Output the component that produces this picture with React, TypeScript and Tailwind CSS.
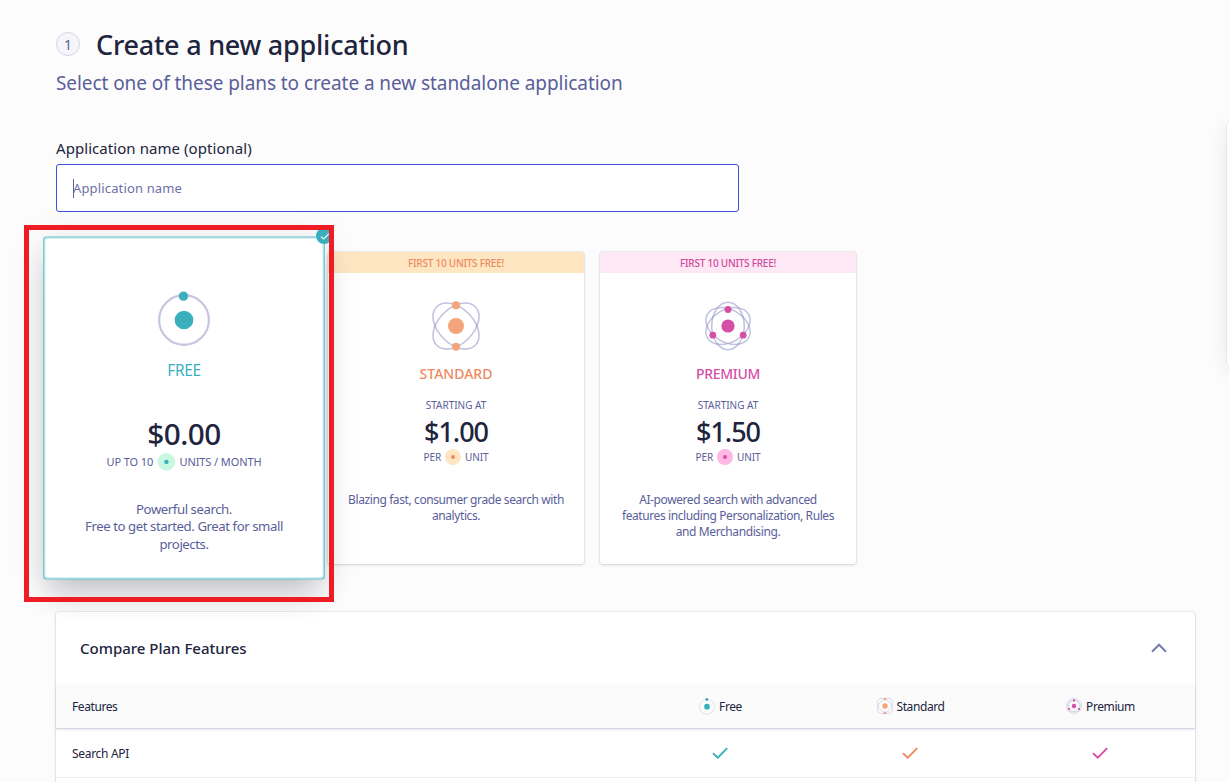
import React from "react";

const INDIGO = "#8f92c3";

function FreeIcon({ className, soft }: { className: string; soft?: boolean }) {
  return (
    <svg viewBox="0 0 48 48" className={className} fill="none">
      <circle cx="24" cy="26" r="22.6" stroke={soft ? "#dcdcec" : "#c3c4de"} strokeWidth={soft ? 2.6 : 1.9} />
      <circle cx="23.5" cy="4.3" r={soft ? 4.4 : 4.2} fill="#3ab0bf" />
      <circle cx="24" cy="26" r="8.5" fill="#3ab0bf" />
    </svg>
  );
}

function StandardIcon({ className, soft }: { className: string; soft?: boolean }) {
  return (
    <svg viewBox="0 0 48 48" className={className} fill="none">
      <g stroke={soft ? "#b9bad8" : INDIGO} strokeOpacity={soft ? 0.6 : 0.55} strokeWidth={soft ? 2.4 : 1.6}>
        <ellipse cx="24" cy="24" rx="27.3" ry="17.7" transform="rotate(45 24 24)" />
        <ellipse cx="24" cy="24" rx="27.3" ry="17.7" transform="rotate(-45 24 24)" />
      </g>
      <circle cx="24" cy="3.2" r="4" fill="#f4a47c" />
      <circle cx="24" cy="44.8" r="4" fill="#f4a47c" />
      <circle cx="24" cy="24" r="8" fill="#f4a47c" />
    </svg>
  );
}

function PremiumIcon({ className, soft }: { className: string; soft?: boolean }) {
  return (
    <svg viewBox="0 0 48 48" className={className} fill="none">
      <g stroke={soft ? "#b9bad8" : INDIGO} strokeOpacity={soft ? 0.6 : 0.55} strokeWidth={soft ? 2.2 : 1.5}>
        <ellipse cx="24" cy="24" rx="16.3" ry="23.7" />
        <ellipse cx="24" cy="24" rx="16.3" ry="23.7" transform="rotate(60 24 24)" />
        <ellipse cx="24" cy="24" rx="16.3" ry="23.7" transform="rotate(-60 24 24)" />
      </g>
      <circle cx="24" cy="7.5" r="3.4" fill="#d64fa6" />
      <circle cx="8.8" cy="33.2" r="3.4" fill="#d64fa6" />
      <circle cx="39.2" cy="33.2" r="3.4" fill="#d64fa6" />
      <circle cx="24" cy="24" r="6.6" fill="#d64fa6" />
    </svg>
  );
}

function Check({ className }: { className: string }) {
  return (
    <svg viewBox="0 0 16 12" className={className} fill="none" stroke="currentColor" strokeWidth="1.9">
      <path d="M1 6.2 5.8 10.7 15.2 1.2" />
    </svg>
  );
}

function UnitDot({ halo, dot }: { halo: string; dot: string }) {
  return (
    <span className={`flex size-4 items-center justify-center rounded-full ${halo}`}>
      <span className={`size-1 rounded-full ${dot}`} />
    </span>
  );
}

interface PlanCardProps {
  banner?: string;
  bannerClass?: string;
  icon: React.ReactNode;
  name: string;
  nameClass: string;
  starting?: string;
  price: string;
  priceClass: string;
  before: string;
  after: string;
  halo: string;
  dot: string;
  lines: string[];
}

function PlanBody(p: PlanCardProps) {
  return (
    <>
      <div
        className={`flex h-[21px] items-center justify-center rounded-t-[2px] pt-0.5 text-[10px] font-medium tracking-[-0.24px] ${p.bannerClass ?? ""}`}
      >
        {p.banner}
      </div>
      <div className="mt-[29px] flex h-12 justify-center">{p.icon}</div>
      <div className={`mt-[13px] flex h-5 items-center justify-center text-[14px] ${p.nameClass}`}>{p.name}</div>
      <div className="mt-[14px] flex h-4 items-center justify-center text-[10px] text-[#5a5e9a]">{p.starting}</div>
      <div
        className={`mt-[3px] flex h-8 items-center justify-center text-[27px] font-medium text-[#21243d] ${p.priceClass}`}
      >
        {p.price}
      </div>
      <div className="mt-px flex h-4 items-center justify-center gap-1 text-[10px] tracking-[-0.1px] text-[#5a5e9a]">
        <span>{p.before}</span>
        <UnitDot halo={p.halo} dot={p.dot} />
        <span>{p.after}</span>
      </div>
      <div className="mt-[27px] text-center text-[12px] leading-4 tracking-[-0.4px] text-[#5a5e9a]">
        {p.lines.map((line) => (
          <div key={line}>{line}</div>
        ))}
      </div>
    </>
  );
}

const columns = [
  { label: "Free", icon: <FreeIcon soft className="size-4 overflow-visible" />, color: "text-[#3ab0bf]" },
  { label: "Standard", icon: <StandardIcon soft className="size-4 overflow-visible" />, color: "text-[#ee8a61]" },
  { label: "Premium", icon: <PremiumIcon soft className="size-4 overflow-visible" />, color: "text-[#d64fa6]" },
];

export default function App() {
  return (
    <div className="relative h-[782px] w-[1229px] overflow-hidden bg-[#fcfcfc] pl-14 font-['Noto_Sans','Open_Sans',sans-serif] text-[#21243d]">
      <header className="pt-7">
        <div className="flex h-8 items-center gap-4">
          <span className="flex size-6 items-center justify-center rounded-full border border-[#d6d6e7] bg-[#f5f5fa] text-[14px] text-[#5a5e9a]">
            1
          </span>
          <h1 className="pt-0.5 text-[27px] leading-8 font-medium tracking-[-0.24px]">Create a new application</h1>
        </div>
        <p className="mt-[9px] text-[19px] leading-7 tracking-[-0.07px] text-[#5a5e9a]">
          Select one of these plans to create a new standalone application
        </p>
      </header>

      <div className="mt-[39px]">
        <label className="block text-[15px] leading-6 tracking-[0.06px]">Application name (optional)</label>
        <div className="mt-1 flex h-12 w-[683px] items-center rounded-[3px] border border-[#3c4fe0] bg-white pl-4">
          <span className="h-[19px] w-px bg-[#5a5e9a]" />
          <span className="-ml-px pt-px text-[13px] tracking-[0.15px] text-[#6e70a6]">Application name</span>
        </div>
      </div>

      <div className="mt-10 flex h-[312px] gap-4">
        <section className="relative z-10 w-[256px] shrink-0 origin-center scale-110 rounded-[3px] border border-[#5cc0ca] bg-white shadow-[inset_0_0_0_0.9px_#a8dfe4,0_16px_26px_-6px_rgba(35,38,59,0.24),0_4px_36px_rgba(35,38,59,0.09)]">
          <div className="-mt-px">
            <PlanBody
              icon={<FreeIcon className="size-12 overflow-visible" />}
              name="FREE"
              nameClass="text-[#3ab0bf] font-normal tracking-[-0.3px]"
              price="$0.00"
              priceClass="tracking-[-0.5px]"
              before="UP TO 10"
              after="UNITS / MONTH"
              halo="bg-[#c9f7e0]"
              dot="bg-[#3ab0bf]"
              lines={["Powerful search.", "Free to get started. Great for small", "projects."]}
            />
          </div>
          <span className="absolute -top-[9px] -right-[8px] flex size-[15px] items-center justify-center rounded-full bg-[#3ab0bf] text-white">
            <Check className="h-[6px] w-2" />
          </span>
        </section>
        <section className="w-[256px] rounded-[3px] bg-white shadow-[0_0_0_1px_rgba(35,38,59,0.06),0_1px_3px_rgba(35,38,59,0.15)]">
          <PlanBody
            banner="FIRST 10 UNITS FREE!"
            bannerClass="bg-[#ffe6c2] text-[#ee8a61]"
            icon={<StandardIcon className="size-12 overflow-visible" />}
            name="STANDARD"
            nameClass="text-[#ee8a61] font-medium"
            starting="STARTING AT"
            price="$1.00"
            priceClass="tracking-[-1px]"
            before="PER"
            after="UNIT"
            halo="bg-[#ffe6c2]"
            dot="bg-[#ee8a61]"
            lines={["Blazing fast, consumer grade search with", "analytics."]}
          />
        </section>
        <section className="w-[256px] rounded-[3px] bg-white shadow-[0_0_0_1px_rgba(35,38,59,0.06),0_1px_3px_rgba(35,38,59,0.15)]">
          <PlanBody
            banner="FIRST 10 UNITS FREE!"
            bannerClass="bg-[#ffe8f5] text-[#d0489c]"
            icon={<PremiumIcon className="size-12 overflow-visible" />}
            name="PREMIUM"
            nameClass="text-[#d64fa6] font-medium tracking-[-0.3px]"
            starting="STARTING AT"
            price="$1.50"
            priceClass="tracking-[-1px]"
            before="PER"
            after="UNIT"
            halo="bg-[#ffb8e4]"
            dot="bg-[#d64fa6]"
            lines={["AI-powered search with advanced", "features including Personalization, Rules", "and Merchandising."]}
          />
        </section>
      </div>

      <section className="mt-12 h-[200px] w-[1139px] rounded-[3px] bg-white shadow-[0_0_0_1px_rgba(35,38,59,0.06),0_1px_3px_rgba(35,38,59,0.15)]">
        <div className="flex h-[72px] items-center justify-between pr-7 pl-6">
          <h2 className="text-[15px] font-medium">Compare Plan Features</h2>
          <svg viewBox="0 0 16 10" className="h-[10px] w-4" fill="none" stroke="#777aaf" strokeWidth="2">
            <path d="M1 8.7 8 1.7l7 7" />
          </svg>
        </div>
        <div className="grid h-[45px] grid-cols-[569px_repeat(3,190px)] items-center border-b border-[#d6d6e7] bg-[#fbfbfc] text-[12px] tracking-[-0.42px] shadow-[0_1px_2px_rgba(35,38,59,0.1)]">
          <span className="pt-0.5 pl-4">Features</span>
          {columns.map((c) => (
            <span key={c.label} className="flex items-center justify-center gap-1 pl-px">
              {c.icon}
              <span className="pt-0.5">{c.label}</span>
            </span>
          ))}
        </div>
        <div className="grid h-[49px] grid-cols-[569px_repeat(3,190px)] items-center border-b border-[#efeff5] text-[12px] tracking-[-0.31px]">
          <span className="pt-0.5 pl-4">Search API</span>
          {columns.map((c) => (
            <span key={c.label} className={`flex items-center justify-center pb-px ${c.color}`}>
              <Check className="h-3 w-4" />
            </span>
          ))}
        </div>
      </section>

      <div className="absolute top-[123px] left-[1227px] h-[243px] w-10 rounded-[4px] bg-white shadow-[0_0_0_1px_rgba(35,38,59,0.05),0_4px_18px_rgba(35,38,59,0.1)]" />
      <div className="absolute top-[225px] left-6 z-20 h-[377px] w-[310px] border-[5px] border-[#ee1c25]" />
    </div>
  );
}
